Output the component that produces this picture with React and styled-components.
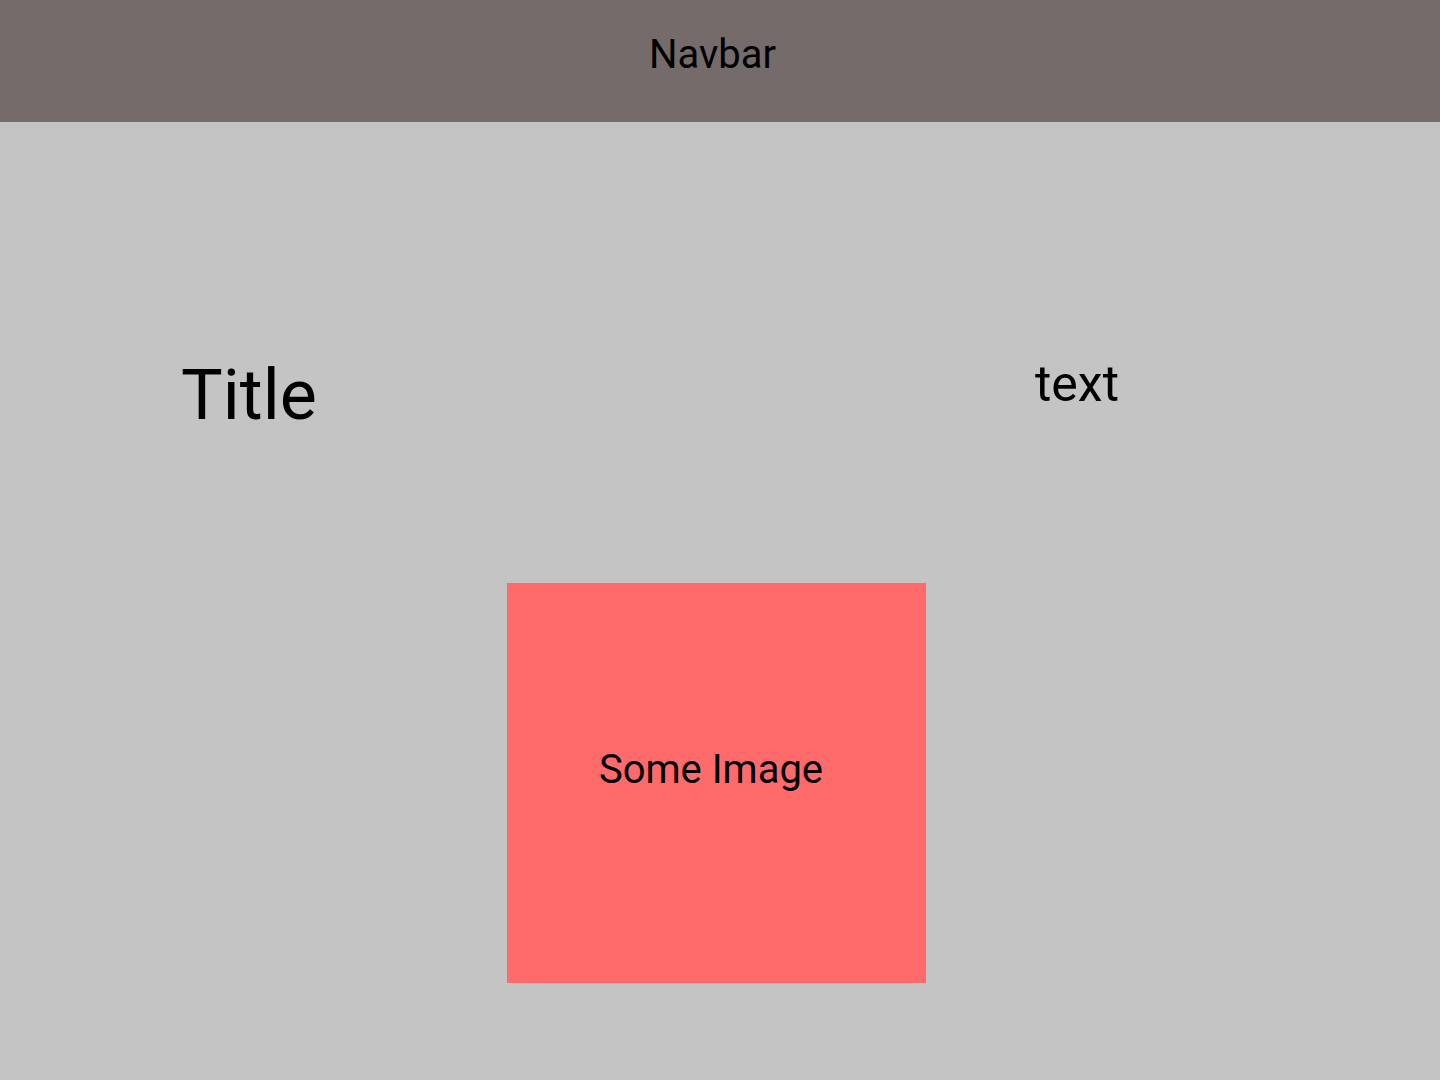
import React from "react";
import styled, { createGlobalStyle } from "styled-components";

const Global = createGlobalStyle`
  html, body { margin: 0; padding: 0; }
  body {
    background: #c4c4c4;
    font-family: Roboto, "Liberation Sans", sans-serif;
    color: #000;
  }
`;

const Page = styled.div`
  width: 1440px;
  height: 1080px;
  display: flex;
  flex-direction: column;
  background: #c4c4c4;
  overflow: hidden;
`;

const Navbar = styled.header`
  height: 122px;
  box-sizing: border-box;
  background: #766b6b;
  padding: 31px 15px 0 0;
  text-align: center;
  font-size: 40px;
`;

const Main = styled.main`
  flex: 1;
  display: flex;
  flex-direction: column;
`;

const Row = styled.section`
  display: flex;
  align-items: flex-start;
  padding: 232px 321px 0 181px;
`;

const Title = styled.h1`
  margin: 0;
  font-size: 70px;
  font-weight: 400;
`;

const Text = styled.p`
  margin: 1px 0 0 auto;
  font-size: 50px;
`;

const ImageBox = styled.div`
  width: 419px;
  height: 400px;
  box-sizing: border-box;
  margin: 147px 0 0 507px;
  background: #ff6b6b;
  padding: 163px 11px 0 0;
  text-align: center;
  font-size: 40px;
`;

export default function App() {
  return (
    <Page>
      <Global />
      <Navbar>Navbar</Navbar>
      <Main>
        <Row>
          <Title>Title</Title>
          <Text>text</Text>
        </Row>
        <ImageBox>Some Image</ImageBox>
      </Main>
    </Page>
  );
}
